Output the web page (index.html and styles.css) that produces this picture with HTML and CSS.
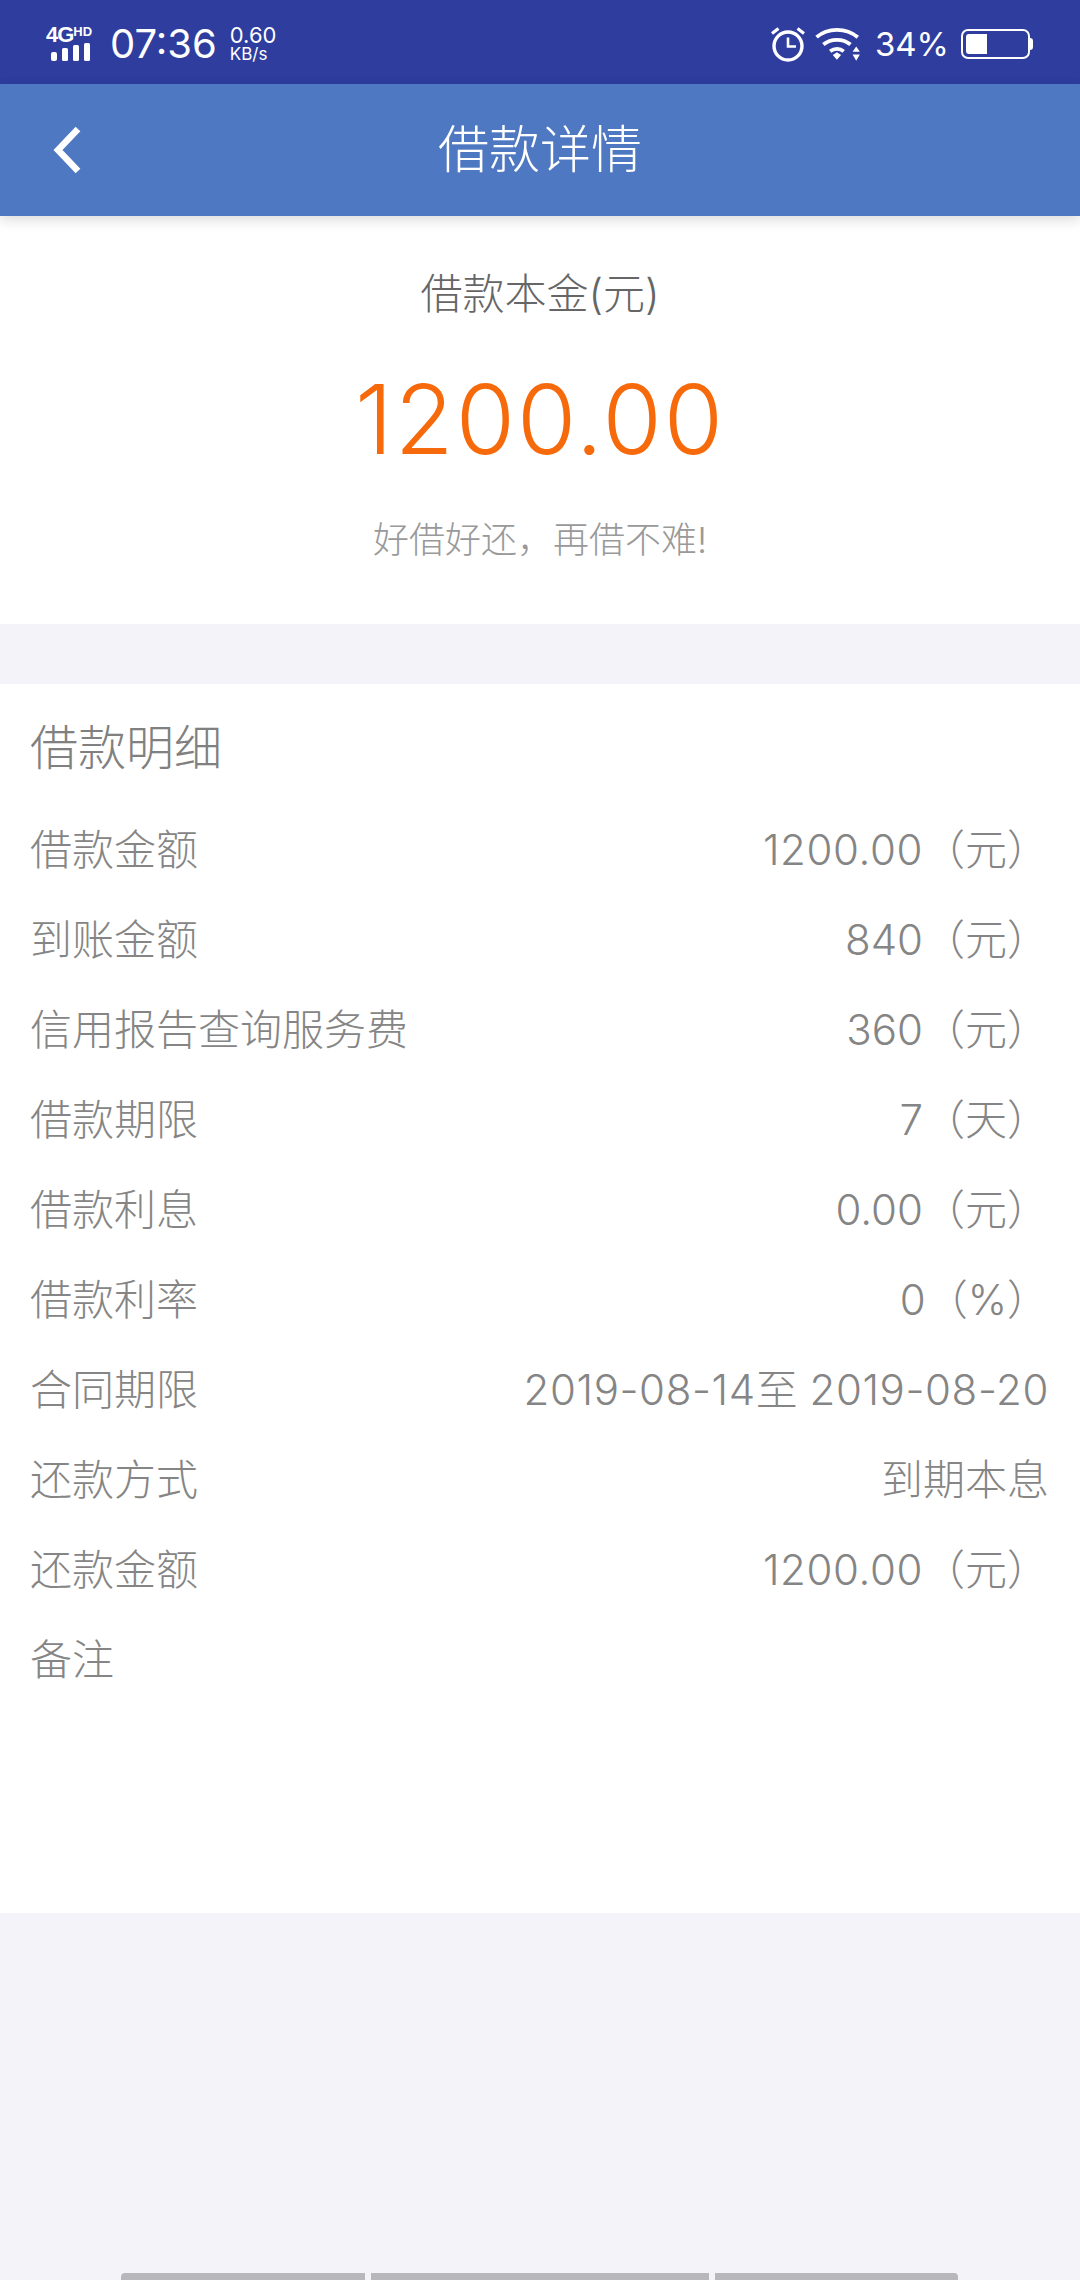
FILE: index.html
```html
<!DOCTYPE html>
<html lang="zh-CN">

<head>
    <meta charset="UTF-8">
    <meta name="viewport" content="width=device-width, initial-scale=1.0">
    <title>借款详情</title>
    <link rel="stylesheet" href="styles.css">
</head>

<body>
    <div id="page">
        <div class="status">
            <div class="status-left">
                <div class="net">
                    <div class="net-text"><span class="net-g">4G</span><span class="net-hd">HD</span></div>
                    <svg class="net-bars" width="42" height="18" viewBox="0 0 42 18">
                        <rect x="1" y="9" width="6" height="9" rx="2" fill="#fff" />
                        <rect x="12" y="5" width="6" height="13" rx="1.5" fill="#fff" />
                        <rect x="23" y="2" width="6" height="16" rx="1.5" fill="#fff" />
                        <rect x="34" y="0" width="6" height="18" rx="1.5" fill="#fff" />
                    </svg>
                </div>
                <span class="time">07:36</span>
                <div class="speed">
                    <span class="speed-num">0.60</span>
                    <span class="speed-unit">KB/s</span>
                </div>
            </div>
            <div class="status-right">
                <svg class="alarm" width="36" height="36" viewBox="0 0 36 36" fill="none" stroke="#fff">
                    <circle cx="18" cy="20" r="14" stroke-width="3.4" />
                    <path d="M18 11.5V20.5H26" stroke-width="2.6" />
                    <path d="M2 7.5L8.5 2.5M34 7.5L27.5 2.5" stroke-width="3.2" />
                </svg>
                <svg class="wifi" width="48" height="36" viewBox="0 0 46 34" fill="none" stroke="#fff" stroke-width="3.6">
                    <path d="M1.5 10.5C12 1 30 1 41 10.5" />
                    <path d="M8 17.5C15 11.5 27 11.5 34 17.5" />
                    <path d="M14.5 24C18.5 21 24 21 27.5 24" />
                    <path d="M17 27.5L21 24.8L25 27.5L21 32Z" fill="#fff" stroke="none" />
                    <path d="M36 24.5L39.5 19.5L43 24.5ZM36 27L43 27L39.5 33Z" fill="#fff" stroke="none" />
                </svg>
                <span class="percent">34%</span>
                <div class="battery">
                    <div class="battery-body">
                        <div class="battery-level"></div>
                    </div>
                    <div class="battery-tip"></div>
                </div>
            </div>
        </div>

        <div class="nav">
            <svg class="back" width="30" height="48" viewBox="0 0 30 48" fill="none" stroke="#fff" stroke-width="6.5">
                <path d="M26 3L6 24L26 45" />
            </svg>
            <h1 class="nav-title">借款详情</h1>
        </div>

        <div class="hero">
            <div class="hero-label">借款本金(元)</div>
            <div class="hero-amount">1200.00</div>
            <div class="hero-tip">好借好还，再借不难!</div>
        </div>

        <div class="detail">
            <h2 class="detail-title">借款明细</h2>
            <div class="row"><span>借款金额</span><span class="val"><span class="num">1200.00</span>（元）</span></div>
            <div class="row"><span>到账金额</span><span class="val">840（元）</span></div>
            <div class="row"><span>信用报告查询服务费</span><span class="val">360（元）</span></div>
            <div class="row"><span>借款期限</span><span class="val">7（天）</span></div>
            <div class="row"><span>借款利息</span><span class="val">0.00（元）</span></div>
            <div class="row"><span>借款利率</span><span class="val">0（%）</span></div>
            <div class="row"><span>合同期限</span><span class="val"><span class="num">2019-08-14</span>至 <span class="num">2019-08-20</span></span></div>
            <div class="row"><span>还款方式</span><span class="val">到期本息</span></div>
            <div class="row"><span>还款金额</span><span class="val"><span class="num">1200.00</span>（元）</span></div>
            <div class="row"><span>备注</span><span class="val"></span></div>
        </div>

        <div class="tabs">
            <div class="tab tab-a"></div>
            <div class="tab tab-b"></div>
            <div class="tab tab-c"></div>
        </div>
    </div>
</body>

</html>
```
FILE: styles.css
```css
body,
h1,
h2 {
    margin: 0;
    padding: 0;
    font-weight: 300;
}

body {
    font-family: Inter, "Noto Sans CJK SC", sans-serif;
}

#page {
    display: flex;
    flex-direction: column;
    width: 1080px;
    height: 2280px;
    overflow: hidden;
    background-color: #f3f3f9;
}

.status {
    display: flex;
    justify-content: space-between;
    align-items: center;
    box-sizing: border-box;
    height: 84px;
    padding: 3px 47px 0 46px;
    color: #fff;
    background-color: #2e3d9e;
}

.status-left,
.status-right {
    display: flex;
    align-items: center;
}

.net {
    display: flex;
    flex-direction: column;
    width: 50px;
}

.net-text {
    display: flex;
    align-items: flex-start;
    height: 17px;
    font-family: "Liberation Sans", sans-serif;
    font-weight: 700;
    line-height: 17px;
}

.net-g {
    font-size: 22px;
    letter-spacing: -1px;
}

.net-hd {
    font-size: 13px;
    line-height: 12px;
}

.net-bars {
    display: block;
    margin-left: 4px;
}

.time {
    margin-left: 14px;
    font-size: 40px;
    font-weight: 400;
    line-height: 48px;
}

.speed {
    display: flex;
    flex-direction: column;
    margin-left: 13px;
    font-weight: 400;
}

.speed-num {
    font-size: 22px;
    line-height: 21px;
}

.speed-unit {
    font-size: 17px;
    line-height: 17px;
}

.alarm {
    margin-right: 9px;
}

.wifi {
    margin-right: 12px;
}

.percent {
    margin-right: 12px;
    font-size: 33px;
    font-weight: 400;
}

.battery {
    display: flex;
    align-items: center;
}

.battery-body {
    box-sizing: border-box;
    width: 69px;
    height: 30px;
    padding: 3px;
    border: 2px solid #fff;
    border-radius: 7px;
}

.battery-level {
    width: 21px;
    height: 100%;
    border-radius: 3px 0 0 3px;
    background-color: #fff;
}

.battery-tip {
    width: 3px;
    height: 12px;
    border-radius: 0 3px 3px 0;
    background-color: #fff;
}

.nav {
    display: flex;
    justify-content: center;
    align-items: center;
    position: relative;
    z-index: 1;
    height: 132px;
    background-color: #4f78c2;
    box-shadow: 0 4px 12px rgba(0, 0, 0, 0.14);
}

.back {
    position: absolute;
    top: 42px;
    left: 52px;
}

.nav-title {
    font-size: 51px;
    line-height: 130px;
    color: #fff;
}

.hero {
    display: flex;
    flex-direction: column;
    align-items: center;
    box-sizing: border-box;
    height: 408px;
    padding-top: 50px;
    background-color: #fff;
}

.hero-label {
    font-size: 42px;
    line-height: 56px;
    color: #666;
}

.hero-amount {
    margin-top: 41px;
    font-size: 96px;
    line-height: 112px;
    letter-spacing: 2px;
    color: #f76a0c;
}

.hero-tip {
    margin-top: 40px;
    font-size: 36px;
    line-height: 50px;
    color: #999;
}

.detail {
    box-sizing: border-box;
    height: 1229px;
    margin-top: 60px;
    padding: 33px 31px 0 30px;
    background-color: #fff;
}

.detail-title {
    margin-bottom: 22px;
    font-size: 48px;
    line-height: 62px;
    color: #808080;
}

.row {
    display: flex;
    justify-content: space-between;
    align-items: center;
    height: 90px;
    font-size: 42px;
    color: #858585;
}

.num {
    letter-spacing: 0.6px;
}

.tabs {
    display: flex;
    gap: 6px;
    margin: auto 0 0 121px;
}

.tab {
    height: 7px;
    background-color: #b8b7bc;
}

.tab-a {
    width: 244px;
    border-top-left-radius: 4px;
}

.tab-b {
    width: 338px;
}

.tab-c {
    width: 243px;
    border-top-right-radius: 4px;
}
```
